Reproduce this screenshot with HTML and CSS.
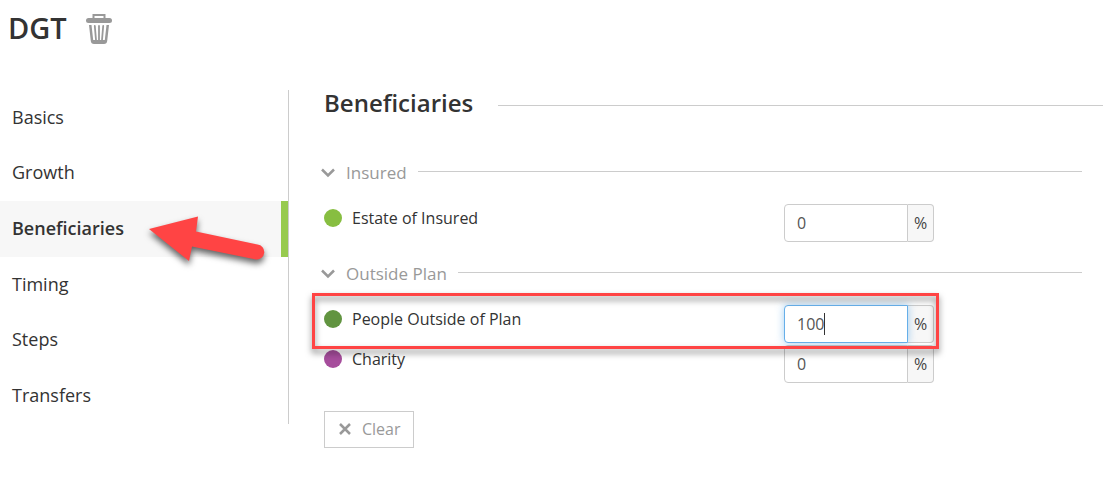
FILE: index.html
```html
<!DOCTYPE html>
<html lang="en">
<head>
<meta charset="utf-8">
<title>DGT</title>
<link rel="stylesheet" href="styles.css">
</head>
<body>
<header class="page-header">
  <h1 class="page-title">DGT</h1>
  <button class="icon-button" type="button" aria-label="Delete">
    <svg width="28" height="32" viewBox="0 0 28 32" fill="none" stroke="#999">
      <path d="M8.500 7V3h11v4" stroke-width="2"/>
      <rect x="1" y="6" width="26" height="5" rx="2.500" fill="#999" stroke="none"/>
      <path d="M4 13h2.500l1.700 15h11.600L21.500 13H24l-1.800 16q-.3 3-3.200 3H9q-2.900 0-3.200-3Z" fill="#999" stroke="none"/>
      <path d="M9.800 14l1.200 14M14 14v14M18.200 14l-1.200 14" stroke-width="1.800" stroke-linecap="round"/>
    </svg>
  </button>
</header>
<div class="layout">
  <nav class="sidebar">
    <a class="nav-item" href="#basics">Basics</a>
    <a class="nav-item" href="#growth">Growth</a>
    <a class="nav-item active" href="#beneficiaries" aria-current="page">Beneficiaries</a>
    <a class="nav-item" href="#timing">Timing</a>
    <a class="nav-item" href="#steps">Steps</a>
    <a class="nav-item" href="#transfers">Transfers</a>
    <svg class="arrow" width="130" height="64" viewBox="0 0 130 64" aria-hidden="true">
      <path d="M4 18 53 5.500 51 20.500 112.500 33.500A7.500 7.500 0 0 1 111 48.500L47 35.500 44 50Z" fill="#ff4444"/>
    </svg>
  </nav>
  <main class="content">
    <h2 class="section-title">Beneficiaries</h2>
    <form class="form">
      <section class="group">
        <h3 class="group-title"><svg class="chevron" width="14" height="10" viewBox="0 0 14 10"><path d="M1 1.500l6 6 6-6"/></svg>Insured</h3>
        <div class="row">
          <label class="row-label" for="estate"><span class="dot lime"></span>Estate of Insured</label>
          <div class="field"><input class="field-input" id="estate" type="text" value="0"><span class="field-unit">%</span></div>
        </div>
      </section>
      <section class="group">
        <h3 class="group-title"><svg class="chevron" width="14" height="10" viewBox="0 0 14 10"><path d="M1 1.500l6 6 6-6"/></svg>Outside Plan</h3>
        <div class="row highlighted">
          <label class="row-label" for="people"><span class="dot green"></span>People Outside of Plan</label>
          <div class="field"><input class="field-input focused" id="people" type="text" value="100"><span class="field-unit">%</span><span class="caret"></span></div>
        </div>
        <div class="row">
          <label class="row-label" for="charity"><span class="dot purple"></span>Charity</label>
          <div class="field"><input class="field-input" id="charity" type="text" value="0"><span class="field-unit">%</span></div>
        </div>
      </section>
      <button class="clear-button" type="button"><svg width="12" height="12" viewBox="0 0 12 12"><path d="M1 1l10 10M11 1L1 11"/></svg>Clear</button>
    </form>
  </main>
</div>
</body>
</html>
```
FILE: styles.css
```css
*, *::before, *::after { box-sizing: border-box; }
body {
  margin: 0;
  background: #fff;
  color: #333;
  font: 16px/24px "Open Sans", "Noto Sans", sans-serif;
}
h1, h2, h3 { margin: 0; }
.page-header {
  display: flex;
  align-items: center;
  gap: 18px;
  padding: 8px 8px 42px;
}
.page-title { font-size: 29px; line-height: 40px; font-weight: 600; }
.icon-button {
  display: flex;
  padding: 0;
  border: 0;
  background: none;
  cursor: pointer;
}
.layout { display: flex; align-items: flex-start; }
.sidebar {
  position: relative;
  display: grid;
  grid-auto-rows: 1fr;
  flex: 0 0 289px;
  min-height: 334px;
  border-right: 1px solid #ccc;
}
.nav-item {
  display: flex;
  align-items: center;
  padding: 0 12px 2px;
  color: #333;
  font-size: 18px;
  text-decoration: none;
}
.nav-item.active {
  border-right: 7px solid #97ca4f;
  background: #f7f7f7;
  font-weight: 600;
}
.arrow {
  position: absolute;
  left: 145px;
  top: 121px;
  overflow: visible;
  filter: drop-shadow(0 4px 3px rgba(0, 0, 0, 0.6));
  pointer-events: none;
}
.content { flex: 1; padding-left: 35px; }
.section-title {
  display: flex;
  align-items: center;
  gap: 25px;
  font-size: 24px;
  line-height: 26px;
  font-weight: 600;
}
.section-title::after, .group-title::after {
  content: "";
  flex: 1;
  height: 1px;
  background: #ccc;
}
.section-title::after { margin-top: 4px; }
.form { padding: 44px 21px 0 0; }
.group { margin-bottom: 19px; }
.group-title {
  display: flex;
  align-items: center;
  margin: 0 0 18px -3px;
  color: #999;
  font-size: 17px;
  line-height: 26px;
  font-weight: 400;
}
.group-title::after { margin: 0 0 3px 11px; }
.chevron {
  margin-right: 11px;
  fill: none;
  stroke: #999;
  stroke-width: 2.5;
}
.row {
  display: grid;
  grid-template-columns: 460px 150px;
  align-items: start;
}
.row + .row { margin-top: 2px; }
.row-label { display: flex; align-items: center; gap: 10px; line-height: 28px; }
.dot { width: 18px; height: 18px; border-radius: 50%; }
.lime { background: #87be41; }
.green { background: #619440; }
.purple { background: #a64d9c; }
.field { position: relative; display: flex; height: 38px; }
.field-input {
  flex: 1;
  min-width: 0;
  padding: 0 12px;
  border: 1px solid #ccc;
  border-radius: 4px 0 0 4px;
  outline: 0;
  background: #fff;
  color: #555;
  font: inherit;
}
.field-unit {
  display: flex;
  align-items: center;
  justify-content: center;
  width: 26px;
  border: 1px solid #ccc;
  border-left: 0;
  border-radius: 0 4px 4px 0;
  background: #f7f7f7;
  color: #444;
}
.field-input.focused {
  z-index: 1;
  border-color: #66afe9;
  box-shadow: 0 0 8px rgba(102, 175, 233, 0.6);
}
.caret {
  position: absolute;
  z-index: 2;
  left: 40px;
  top: 8px;
  width: 1px;
  height: 22px;
  background: #333;
}
.highlighted { position: relative; }
.highlighted::after {
  content: "";
  position: absolute;
  z-index: 3;
  left: -12px;
  top: -12px;
  width: 627px;
  height: 56px;
  border: 3px solid #ff4444;
  filter: drop-shadow(0 4px 3px rgba(0, 0, 0, 0.5));
  pointer-events: none;
}
.clear-button {
  display: flex;
  align-items: center;
  gap: 11px;
  margin-top: 28px;
  padding: 5px 12px 6px 14px;
  border: 1px solid #ccc;
  background: #fff;
  color: #999;
  font: inherit;
  cursor: pointer;
}
.clear-button svg { stroke: #999; stroke-width: 2.5; }
```
